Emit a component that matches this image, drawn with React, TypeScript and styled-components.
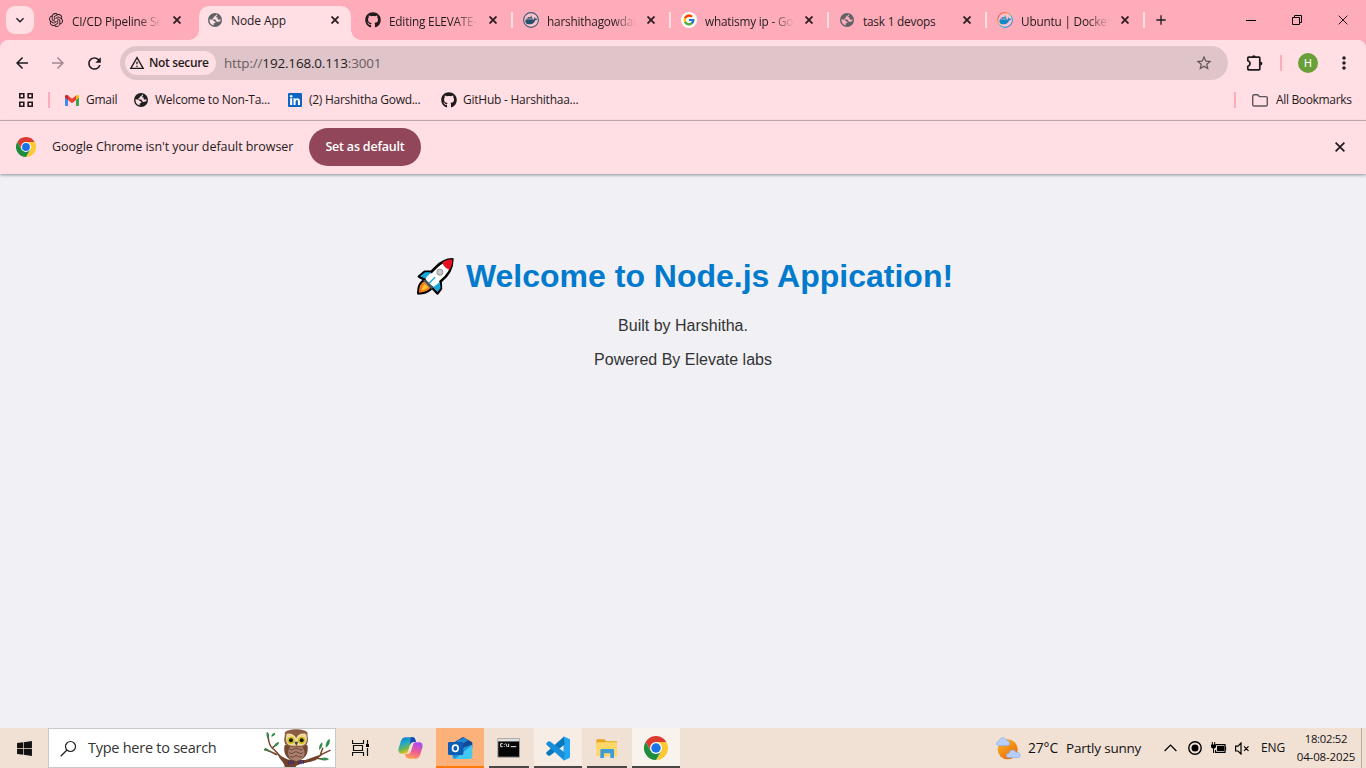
import React from 'react';
import styled, { createGlobalStyle, css } from 'styled-components';
import { FaGithub, FaWindows } from 'react-icons/fa';
import { SiOpenai, SiDocker } from 'react-icons/si';
import { FcGoogle } from 'react-icons/fc';
import {
  MdArrowBack, MdArrowForward, MdRefresh, MdStarBorder, MdMoreVert,
  MdAdd, MdOutlineWarningAmber, MdKeyboardArrowDown,
} from 'react-icons/md';

const Global = createGlobalStyle`
  * { box-sizing: border-box; }
  body { margin: 0; overflow: hidden; font-family: 'Open Sans', sans-serif; color: #1f1b1c; }
  svg { display: block; flex: none; }
`;
const Screen = styled.div`display: flex; flex-direction: column; width: 1366px; height: 768px; background: #f0f0f5;`;

const Label = styled.span<{ $size?: number; $ls?: number; $weight?: number; $color?: string }>`
  font-size: ${p => p.$size ?? 12}px;
  letter-spacing: ${p => p.$ls ?? -0.24}px;
  font-weight: ${p => p.$weight ?? 400};
  color: ${p => p.$color ?? 'inherit'};
  white-space: nowrap;
  line-height: 18px;
`;

const TabStrip = styled.div`display: flex; height: 40px; background: #ffacba; padding-left: 6px;`;
const TabSearch = styled.div`
  display: flex; align-items: center; justify-content: center; width: 28px; height: 28px;
  margin: 6px 4px 0 0; border-radius: 9px; background: #ffdee4;
`;
const Tab = styled.div<{ $active?: boolean; $divider?: boolean; $inset: number }>`
  position: relative; display: flex; align-items: center; width: 158px; height: 40px; padding: 0 11px 0 ${p => p.$inset}px;
  ${p => p.$active && css`
    &::before {
      content: ''; position: absolute; left: 3px; right: 3px; top: 6px; bottom: 0;
      border-radius: 10px 10px 0 0; background: #ffdee4;
    }
  `}
  ${p => p.$divider && css`
    &::after { content: ''; position: absolute; right: -1px; top: 12px; width: 2px; height: 16px; background: #ffdee4; }
  `}
`;
const Flare = styled.i<{ $right?: boolean }>`
  position: absolute; bottom: 0; ${p => (p.$right ? 'right: -7px' : 'left: -7px')}; width: 10px; height: 10px;
  background: radial-gradient(circle at ${p => (p.$right ? '100%' : '0')} 0, #ffacba 9.5px, #ffdee4 10px);
`;
const Favicon = styled.div`position: relative; display: flex; align-items: center; justify-content: center; width: 16px; height: 16px;`;
const TabTitle = styled.div<{ $fade?: boolean }>`
  position: relative; width: 89px; margin-left: 8px; overflow: hidden; display: flex; padding-top: 1px;
  ${p => p.$fade && css`mask-image: linear-gradient(90deg, #000 74%, transparent 100%);`}
`;
const TabClose = styled.div`position: relative; display: flex; justify-content: center; width: 16px; margin-left: auto; color: #2c1c20;`;
const NewTab = styled.div`display: flex; align-items: center; justify-content: center; width: 34px; height: 40px;`;
const WindowButtons = styled.div`display: flex; margin-left: auto;`;
const WindowButton = styled.div`display: flex; align-items: center; justify-content: center; width: 46px; height: 40px;`;

const ToolbarBack = styled.div`background: #ffacba;`;
const Toolbar = styled.div`
  display: flex; align-items: center; height: 46px; padding: 0 12px 0 10px; border-radius: 8px 8px 0 0; background: #ffdee4;
`;
const ToolButton = styled.div<{ $w: number; $color?: string }>`
  display: flex; align-items: center; justify-content: center; width: ${p => p.$w}px; height: 34px; color: ${p => p.$color ?? '#1f1b1c'};
`;
const Omnibox = styled.div`
  display: flex; align-items: center; width: 1108px; height: 34px; padding: 0 15px 0 5px; border-radius: 17px; background: #dfc4c9;
`;
const SecurityChip = styled.div`
  display: flex; align-items: center; gap: 4px; width: 91px; height: 24px; padding-left: 4px; margin-right: 8px;
  border-radius: 12px; background: #ffdee4;
`;
const Spacer = styled.div`flex: 1;`;
const Divider = styled.div`width: 2px; height: 16px; background: #ffacba;`;
const Avatar = styled.div`
  display: flex; align-items: center; justify-content: center; width: 20px; height: 20px; border-radius: 50%;
  background: #689f38; color: #fff; font: 400 11px Roboto, sans-serif;
`;
const Bookmarks = styled.div`
  display: flex; align-items: center; height: 35px; padding: 0 15px 6px 19px; background: #ffdee4; border-bottom: 1px solid #c9b0b5;
`;
const Bookmark = styled.div<{ $w: number; $gap?: number }>`
  display: flex; align-items: center; gap: ${p => p.$gap ?? 7}px; width: ${p => p.$w}px;
`;
const InfoBar = styled.div`
  display: flex; align-items: center; height: 53px; padding: 0 21px 2px 16px; background: #ffdee4;
  box-shadow: 0 1px 3px rgba(60, 64, 67, .55); z-index: 1;
`;
const InfoText = styled.div`display: flex; width: 273px; padding-left: 16px;`;
const DefaultButton = styled.div`
  display: flex; align-items: center; justify-content: center; width: 112px; height: 38px; border-radius: 19px;
  background: #914759; color: #fff;
`;

const Page = styled.main`
  flex: 1; padding-top: 84px; text-align: center; background: #f0f0f5; color: #333;
  font-family: 'Liberation Sans', Arial, sans-serif;
  p { margin: 0 0 16px; font-size: 16px; line-height: 18px; }
`;
const Heading = styled.h1`
  display: flex; align-items: center; justify-content: center; gap: 12px; margin: 0 0 22px; padding-left: 4px;
  height: 37px; font-size: 32px; line-height: 37px; color: #007acc;
`;

const Taskbar = styled.footer`display: flex; height: 40px; background: #f1e1d5; color: #111;`;
const TaskSlot = styled.div<{ $w?: number; $bg?: string; $line?: string; $inset?: number }>`
  display: flex; align-items: center; justify-content: center; width: ${p => p.$w ?? 49}px; height: 40px;
  background: ${p => p.$bg ?? 'transparent'};
  border-bottom: ${p => (p.$line ? `2px solid ${p.$line}` : '0')};
  padding-top: ${p => (p.$line ? 2 : 0)}px;
  margin: 0 ${p => p.$inset ?? 0}px;
`;
const SearchBox = styled.div`
  display: flex; align-items: center; width: 288px; height: 40px; padding: 0 4px 0 11px; background: #fff; border: 1px solid #c8c8c8;
`;
const SearchText = styled.div`display: flex; margin-left: 11px;`;
const Weather = styled.div`display: flex; align-items: center; width: 168px; margin-left: auto;`;
const Temperature = styled.div`display: flex; width: 38px; margin-left: 7px;`;
const Tray = styled.div`display: flex; align-items: center; width: 121px;`;
const TrayIcon = styled.div<{ $w: number }>`display: flex; align-items: center; width: ${p => p.$w}px;`;
const Clock = styled.div`display: flex; flex-direction: column; align-items: center; width: 60px; margin-left: 11px; padding-top: 2px;`;
const ShowDesktop = styled.div`width: 5px; height: 40px; margin-left: 5px; border-left: 1px solid #b9aca3;`;

const Globe = ({ color, size = 14, hole }: { color: string; size?: number; hole: string }) => (
  <svg width={size} height={size} viewBox="0 0 14 14">
    <circle cx="7" cy="7" r="7" fill={color} />
    <path d="M7.8 1.6 9.4 2.2 9 3.400 7.600 4.600 6.2 4.800 5.8 6.200 4.500 6.700 8.1 6.800 8.6 8.200 10.700 8.300 12.4 7.400A5.5 5.5 0 0 0 7.8 1.6Z" fill={color} />
    <path d="M8.200 1.600 7.200 3.200 5.900 3.500 5.600 5 4.300 5.500 4.400 6.600 7.400 6.600 8.400 8.200 9.200 8.900 12.300 8.200A5.500 5.500 0 0 0 12.500 6.300L10.800 6.700 9.500 5.900 9.700 4.500 7.900 4.300 9.300 2.100Z" fill={hole} />
    <path d="M1.500 6.300 4.400 6.800 6.200 8.300 7.400 8.700 7.300 10.100 5.600 10.400 5.700 12.400A5.600 5.600 0 0 1 1.500 6.300Z" fill={hole} />
    <path d="M8.200 10.500 9.600 9.700 11.300 10.500A5.500 5.500 0 0 1 7.200 12.500Z" fill={color} />
  </svg>
);
const Chrome = ({ size }: { size: number }) => (
  <svg width={size} height={size} viewBox="0 0 48 48">
    <circle cx="24" cy="24" r="24" fill="#fff" />
    <path d="M24 12H44.8A24 24 0 0 0 3.2 12L13.6 30Z" fill="#db3b2f" />
    <path d="M34.4 30 24 48A24 24 0 0 0 44.8 12H24Z" fill="#fcc934" />
    <path d="M13.6 30 3.2 12A24 24 0 0 0 24 48L34.4 30Z" fill="#1e8e3e" />
    <circle cx="24" cy="24" r="12" fill="#fff" /><circle cx="24" cy="24" r="9.5" fill="#1a73e8" />
  </svg>
);
const DockerBadge = ({ color, ring }: { color: string; ring: string }) => (
  <svg width="16" height="16" viewBox="0 0 16 16">
    <defs><linearGradient id="ring" x1="0" y1="0" x2="1" y2="1">
      <stop offset="0" stopColor="#ee3a5c" /><stop offset=".38" stopColor="#ff9d4d" /><stop offset=".6" stopColor="#2bc4e0" /><stop offset="1" stopColor="#3c62d8" />
    </linearGradient></defs>
    <circle cx="8" cy="8" r="7.4" fill="#ffc3cd" stroke={ring} strokeWidth="1.1" />
    <SiDocker x="2.2" y="2" size={12} color={color} />
  </svg>
);
const Gmail = () => (
  <svg width="14" height="11" viewBox="0 0 28 22">
    <path d="M0 4V20a2 2 0 0 0 2 2H6V9Z" fill="#4285f4" /><path d="M28 4V20a2 2 0 0 1-2 2H22V9Z" fill="#34a853" />
    <path d="M22 2V10l6-5V3.500C28 .5 24.500-.8 22 1Z" fill="#fbbc04" /><path d="M0 3.500V5L6 10V1C3.500-.8 0 .5 0 3.500Z" fill="#c5221f" />
    <path d="M6 1 14 7.500 22 1V10L14 16.500 6 10Z" fill="#ea4335" />
  </svg>
);
const LinkedIn = () => (
  <svg width="14" height="14" viewBox="0 0 14 14">
    <rect width="14" height="14" rx="1" fill="#0a66c2" /><circle cx="3.200" cy="3.200" r="1.300" fill="#fff" />
    <path d="M2.100 5.300H4.200V12H2.100ZM5.500 5.300H7.500V6.300C8.600 4.600 12 4.800 12 8V12H9.900V8.600C9.900 6.400 7.600 6.600 7.600 8.600V12H5.500Z" fill="#fff" />
  </svg>
);
const AppsGrid = () => (
  <svg width="14" height="14"><path d="M.8.8h4v4h-4zM9.200.8h4v4h-4zM.8 9.200h4v4h-4zM9.200 9.200h4v4h-4z" fill="none" stroke="#1f1b1c" strokeWidth="1.600" /></svg>
);
const Folder = () => (
  <svg width="16" height="13"><path d="M.7 2.200V10.800Q.7 12 2 12H14Q15.300 12 15.300 10.800V3.800Q15.300 2.600 14 2.600H7.500L5.600.8H2Q.7.8.7 2.200Z" fill="none" stroke="#5f5659" strokeWidth="1.400" /></svg>
);
const Puzzle = () => (
  <svg width="17" height="17" viewBox="0 0 17 17">
    <path d="M1.800 3Q1.800 2.200 2.600 2.200H13Q13.800 2.200 13.800 3V14Q13.800 14.800 13 14.800H2.600Q1.800 14.800 1.800 14V11.200Q4 10.600 4 8.500 4 6.400 1.800 5.800Z" fill="none" stroke="#1f1b1c" strokeWidth="1.700" strokeLinejoin="round" />
    <path d="M5.800 2Q6 .2 7.800.2 9.600.2 9.800 2ZM14 6.500Q16.400 6.700 16.400 8.500 16.400 10.300 14 10.500Z" fill="#1f1b1c" />
  </svg>
);
const Cross = ({ size = 8, w = 1.7 }: { size?: number; w?: number }) => (
  <svg width={size} height={size} viewBox="0 0 8 8"><path d="M.5.5 7.500 7.500M7.500.5.5 7.500" stroke="currentColor" strokeWidth={w * 8 / size} /></svg>
);
const Rocket = () => (
  <svg width="37" height="37" viewBox="0 0 110 110">
    <path d="M105 4C84 4 69 14 56 28L43 41H23L6 55 23 64 14 73C3 84 5 96 4 105 16 104 26 104 38 94L45 88 61 105 71 91 70 70C93 52 105 34 105 4Z" fill="#fff" stroke="#000" strokeWidth="8" strokeLinejoin="round" />
    <path d="M105 4C91 4 83 8 75 14 81 28 87 30 97 35 103 25 106 15 105 4Z" fill="#e81123" />
    <path d="M42 42H24L9 54 25 61ZM68 71 70 89 61 101 48 87Z" fill="#14a8df" />
    <path d="M20 70C5 81 7 91 6 103 19 101 30 101 40 89Z" fill="#f27a16" />
    <path d="M23 77C14 86 15 91 14 96 21 95 26 94 33 87Z" fill="#ffc52e" />
    <path d="M18 67 25 63 49 87 43 93Z" fill="#47515a" />
    <path d="M35 76 54 57" stroke="#14a8df" strokeWidth="4" /><circle cx="68" cy="42" r="8.500" fill="#c9c9c9" stroke="#999" strokeWidth="3" />
  </svg>
);
const Owl = () => (
  <svg width="68" height="38" viewBox="787 28 204 114">
    <path d="M800 40C806 62 801 74 816 86 832 98 832 112 858 120M792 90C808 92 816 100 828 105M816 84 832 70M915 125C944 124 950 116 963 104L988 92M958 108 966 86M945 116 975 119" fill="none" stroke="#75472f" strokeWidth="4.500" strokeLinecap="round" />
    <path d="M830 103C848 124 868 120 914 121L958 105C940 135 890 126 884 143H852C852 128 838 122 830 103Z" fill="#70422c" />
    <path d="M852 76C846 100 858 122 884 124 912 123 926 101 920 76Z" fill="#74472f" />
    <ellipse cx="887" cy="99" rx="25" ry="25" fill="#a98070" />
    <path d="M867 88q7 6 13 0t13 0 13 0M865 99q8 6 14 0t14 0 14 0M869 110q7 5 12 0t12 0 12 0" stroke="#6b4337" strokeWidth="3" fill="none" />
    <path d="M852 39C861 25 912 25 921 39 918 48 925 55 920 70 913 85 898 84 886 82 872 84 857 81 852 69 848 55 855 48 852 39Z" fill="#8b5b43" />
    <path d="M858 42C868 40 880 42 887 56 892 42 904 40 916 43 922 58 918 77 902 78 893 80 891 76 887 79 881 77 878 80 868 77 855 72 854 58 858 42Z" fill="#eed89b" />
    <circle cx="871" cy="62" r="11" fill="#cdbf20" /><circle cx="903" cy="62" r="11" fill="#cdbf20" />
    <circle cx="871" cy="62" r="6" fill="#17130a" /><circle cx="903" cy="62" r="6" fill="#17130a" />
    <path d="M881 66 887 79 893 66Z" fill="#4d4038" /><path d="M864 123v12m7-13v13m7-12v10m16-10v12m7-13v12m7-12v11" stroke="#26238b" strokeWidth="2.500" />
    <path d="M801 57Q794 46 801 37 809 48 801 57ZM812 51Q812 40 824 39 823 49 812 51ZM808 96Q796 96 791 84 804 85 808 96ZM820 82Q822 69 835 68 834 79 820 82ZM955 91Q954 74 965 68 967 84 955 91ZM975 84Q974 64 987 57 991 74 975 84ZM958 119Q970 108 986 118 972 127 958 119Z" fill="#338b4c" />
  </svg>
);
const Copilot = () => (
  <svg width="25" height="22" viewBox="0 0 75 66">
    <defs>
      <linearGradient id="cpa" x1="0" y1="0" x2=".4" y2="1"><stop stopColor="#0877c9" /><stop offset=".4" stopColor="#22a7ca" /><stop offset=".7" stopColor="#66b65a" /><stop offset="1" stopColor="#f5c316" /></linearGradient>
      <linearGradient id="cpb" x1=".6" y1="0" x2=".3" y2="1"><stop stopColor="#a84cf0" /><stop offset=".55" stopColor="#f25d91" /><stop offset="1" stopColor="#ffa552" /></linearGradient>
    </defs>
    <path d="M21 1H43C51 1 52 8 54 15H46C39 15 37 20 34 29L29 46C27 51 20 50 12 50 2 50 0 43 2 34L9 11Q12 2 21 1Z" fill="url(#cpa)" />
    <path d="M54 65H32C24 65 23 58 21 51H29C36 51 38 46 41 37L46 20C48 15 55 16 63 16 73 16 75 23 73 32L66 55Q63 64 54 65Z" fill="url(#cpb)" />
    <path d="M38 1H44C51 1 52 8 54 15H46Q39 15 36 23Z" fill="#1947b8" />
  </svg>
);
const Outlook = () => (
  <svg width="25" height="22" viewBox="0 0 75 66">
    <path d="M21 14 45 0 73 16V32L26 43Z" fill="#124a97" /><path d="M26 11 49 2 60 10 30 30Z" fill="#1d87d6" /><path d="M73 23V57Q73 66 63 66H23Q13 66 13 57V44Z" fill="#42c8f1" />
    <path d="M14 45 73 23 20 66Q12 63 14 55Z" fill="#1b94dc" /><rect y="15" width="46" height="39" rx="4" fill="#0d5cb6" />
    <ellipse cx="22" cy="34" rx="8.500" ry="9.500" fill="none" stroke="#fff" strokeWidth="5" />
  </svg>
);
const Terminal = () => (
  <svg width="24" height="20" viewBox="0 0 72 60">
    <rect x="1" y="1" width="68" height="58" rx="2" fill="#9a9a9a" /><rect x="3" y="3" width="64" height="6" fill="#dedede" /><rect x="4" y="11" width="62" height="45" fill="#050505" />
    <path d="M17 17H11V26H17M22 18v2m0 4v2M26 16l5 11M35 17v10M41 26H58" fill="none" stroke="#eee" strokeWidth="3" />
  </svg>
);
const VsCode = () => (
  <svg width="25" height="25" viewBox="0 0 100 100">
    <path d="M70 1 96 13V87L70 99Z" fill="#24a5f1" /><path d="M71 3 2 65Q-1 70 4 74L10 79Q14 80 18 77L75 34Z" fill="#0878be" />
    <path d="M71 97 2 35Q-1 30 4 26L10 21Q14 20 18 23L75 66Z" fill="#168fd8" />
  </svg>
);
const Explorer = () => (
  <svg width="22" height="19" viewBox="0 0 66 57">
    <path d="M1 4Q1 1 4 1H24L31 7H60Q63 7 63 10V20H1Z" fill="#e5a51d" /><path d="M1 10H60Q63 10 63 14V52H1Z" fill="#ffd768" />
    <path d="M13 57V34Q13 30 17 30H50Q54 30 54 34V57H43V43H24V57Z" fill="#3f9bd8" />
  </svg>
);
const WeatherIcon = () => (
  <svg width="25" height="23" viewBox="0 0 75 69">
    <defs><linearGradient id="sun" x2=".7" y2="1"><stop stopColor="#f8ba25" /><stop offset="1" stopColor="#ee6a08" /></linearGradient></defs>
    <circle cx="35" cy="37" r="30" fill="url(#sun)" />
    <path d="M9 26C-1 26-1 13 9 13 12-1 29 0 31 10 43 9 44 26 34 26ZM39 62C28 61 29 49 39 49 41 37 55 35 60 46 74 43 76 61 66 62Z" fill="#b8cffa" stroke="#89a8e8" strokeWidth="2" />
  </svg>
);
const Record = () => <svg width="14" height="14"><circle cx="7" cy="7" r="6.200" fill="none" stroke="#000" strokeWidth="1.400" /><circle cx="7" cy="7" r="3.500" /></svg>;
const Battery = () => (
  <svg width="16" height="12"><path d="M4.500 2.600H14V10.400H4.500V8M14.500 4.500V8.500" fill="none" stroke="#000" strokeWidth="1.200" /><path d="M6 4H13V9H6ZM0 2.500H5V4.500Q5 6.300 3 6.500V11H2V6.500Q0 6.300 0 4.500Z" /><path d="M1.300 0V3M3.700 0V3" stroke="#000" /></svg>
);
const Muted = () => (
  <svg width="15" height="13"><path d="M.6 4.200H3L6 1V12L3 9H.6ZM9 4.300 13.500 8.800M13.500 4.300 9 8.800" fill="none" stroke="#000" strokeWidth="1.200" /></svg>
);

const tabs: { title: string; icon: React.ReactNode; active?: boolean; fade?: boolean; divider?: boolean; inset?: number }[] = [
  { title: 'CI/CD Pipeline Se', icon: <SiOpenai size={14} />, fade: true, inset: 10 },
  { title: 'Node App', icon: <Globe color="#5f6368" hole="#ffdee4" />, active: true },
  { title: 'Editing ELEVATE-', icon: <FaGithub size={16} />, fade: true, divider: true },
  { title: 'harshithagowdar', icon: <DockerBadge color="#24506c" ring="#395b72" />, fade: true, divider: true },
  { title: 'whatismy ip - Go', icon: <svg width="16" height="16"><circle cx="8" cy="8" r="8" fill="#fff" /><FcGoogle x="1.500" y="1.500" size={13} /></svg>, fade: true, divider: true },
  { title: 'task 1 devops', icon: <Globe color="#5f6368" hole="#ffacba" />, divider: true },
  { title: 'Ubuntu | Docker', icon: <DockerBadge color="#1488c6" ring="url(#ring)" />, fade: true, divider: true },
];

export default function App() {
  return (
    <Screen>
      <Global />
      <TabStrip>
        <TabSearch><MdKeyboardArrowDown size={16} /></TabSearch>
        {tabs.map(t => (
          <Tab key={t.title} $active={t.active} $divider={t.divider} $inset={t.inset ?? 11}>
            {t.active && <><Flare /><Flare $right /></>}
            <Favicon>{t.icon}</Favicon>
            <TabTitle $fade={t.fade}><Label $size={t.active ? 12 : 11.8} $ls={t.active ? -0.1 : -0.2}>{t.title}</Label></TabTitle>
            <TabClose><Cross w={1.8} /></TabClose>
          </Tab>
        ))}
        <NewTab><MdAdd size={16} /></NewTab>
        <WindowButtons>
          <WindowButton><svg width="10" height="10"><path d="M0 5.500H10" stroke="#000" /></svg></WindowButton>
          <WindowButton><svg width="11" height="11"><path d="M.5 2.500h7v7h-7zM2.500 2.500V.5h7v7h-2" fill="none" stroke="#000" /></svg></WindowButton>
          <WindowButton><Cross size={10} w={1} /></WindowButton>
        </WindowButtons>
      </TabStrip>
      <ToolbarBack>
        <Toolbar>
          <ToolButton $w={24}><MdArrowBack size={18} /></ToolButton>
          <ToolButton $w={48} $color="#a3898e"><MdArrowForward size={18} /></ToolButton>
          <ToolButton $w={24}><MdRefresh size={19} /></ToolButton>
          <ToolButton $w={14} />
          <Omnibox>
            <SecurityChip><MdOutlineWarningAmber size={16} /><Label $weight={600} $ls={-0.34}>Not secure</Label></SecurityChip>
            <Label $size={13.5} $ls={-0.18} $color="#6a5c60">http://<Label $size={13.5} $ls={-0.18} $color="#1f1b1c">192.168.0.113</Label>:3001</Label>
            <Spacer />
            <MdStarBorder size={18} color="#5f5356" />
          </Omnibox>
          <ToolButton $w={52}><Puzzle /></ToolButton>
          <Divider />
          <ToolButton $w={52}><Avatar>H</Avatar></ToolButton>
          <MdMoreVert size={20} />
        </Toolbar>
      </ToolbarBack>
      <Bookmarks>
        <AppsGrid />
        <ToolButton $w={32}><Divider /></ToolButton>
        <Bookmark $w={69}><Gmail /><Label>Gmail</Label></Bookmark>
        <Bookmark $w={154}><Globe color="#1f1f1f" hole="#ffdee4" /><Label>Welcome to Non-Ta...</Label></Bookmark>
        <Bookmark $w={153}><LinkedIn /><Label $ls={-0.27}>(2) Harshitha Gowd...</Label></Bookmark>
        <Bookmark $w={140} $gap={6}><FaGithub size={16} /><Label>GitHub - Harshithaa...</Label></Bookmark>
        <Spacer />
        <ToolButton $w={34}><Divider /></ToolButton>
        <Bookmark $w={99} $gap={8}><Folder /><Label $ls={-0.34}>All Bookmarks</Label></Bookmark>
      </Bookmarks>
      <InfoBar>
        <Chrome size={20} />
        <InfoText><Label $size={12.5} $ls={-0.06}>Google Chrome isn't your default browser</Label></InfoText>
        <DefaultButton><Label $size={12.5} $ls={-0.2} $weight={600}>Set as default</Label></DefaultButton>
        <Spacer />
        <Cross size={10} />
      </InfoBar>
      <Page>
        <Heading><Rocket /><span>Welcome to Node.js Appication!</span></Heading>
        <p>Built by Harshitha.</p>
        <p>Powered By Elevate labs</p>
      </Page>
      <Taskbar>
        <TaskSlot $w={48}><FaWindows size={17} /></TaskSlot>
        <SearchBox>
          <svg width="17" height="17" viewBox="0 0 17 17"><circle cx="10.500" cy="6.500" r="5" fill="none" stroke="#222" strokeWidth="1.200" /><path d="M7 10 .7 16.300" stroke="#222" strokeWidth="1.300" /></svg>
          <SearchText><Label $size={14.5} $ls={-0.26} $color="#333">Type here to search</Label></SearchText>
          <Spacer />
          <Owl />
        </SearchBox>
        <TaskSlot $w={48}>
          <svg width="17" height="16"><path d="M.5 0V3.500H11.500V0M.5 16V12.500H11.500V16M1.500 5.500h9v5h-9zM15.500 0V4M15.500 8V16" fill="none" stroke="#111" strokeWidth="1.200" /><rect x="14" y="4" width="3" height="3" /></svg>
        </TaskSlot>
        <TaskSlot $w={52}><Copilot /></TaskSlot>
        <TaskSlot $w={48} $bg="#fcb07a" $line="#ff7a0c"><Outlook /></TaskSlot>
        <TaskSlot $w={40} $inset={5} $line="#4b4746"><Terminal /></TaskSlot>
        <TaskSlot $w={48} $bg="#f7ede5" $line="#4b4746"><VsCode /></TaskSlot>
        <TaskSlot $w={40} $inset={5} $line="#4b4746"><Explorer /></TaskSlot>
        <TaskSlot $w={48} $bg="#f9f3ee" $line="#4b4746"><Chrome size={24} /></TaskSlot>
        <Weather>
          <WeatherIcon />
          <Temperature><Label $size={13.8} $ls={-0.1}>27°C</Label></Temperature>
          <Label $size={13.5} $ls={-0.21}>Partly sunny</Label>
        </Weather>
        <Tray>
          <TrayIcon $w={24}><svg width="13" height="8"><path d="M.6 7 6.500 1 12.400 7" fill="none" stroke="#000" strokeWidth="1.200" /></svg></TrayIcon>
          <TrayIcon $w={23}><Record /></TrayIcon>
          <TrayIcon $w={24}><Battery /></TrayIcon>
          <TrayIcon $w={26}><Muted /></TrayIcon>
          <Label $ls={-0.15}>ENG</Label>
        </Tray>
        <Clock><Label $size={11.3} $ls={-0.28}>18:02:52</Label><Label $size={11.5} $ls={-0.15}>04-08-2025</Label></Clock>
        <ShowDesktop />
      </Taskbar>
    </Screen>
  );
}
